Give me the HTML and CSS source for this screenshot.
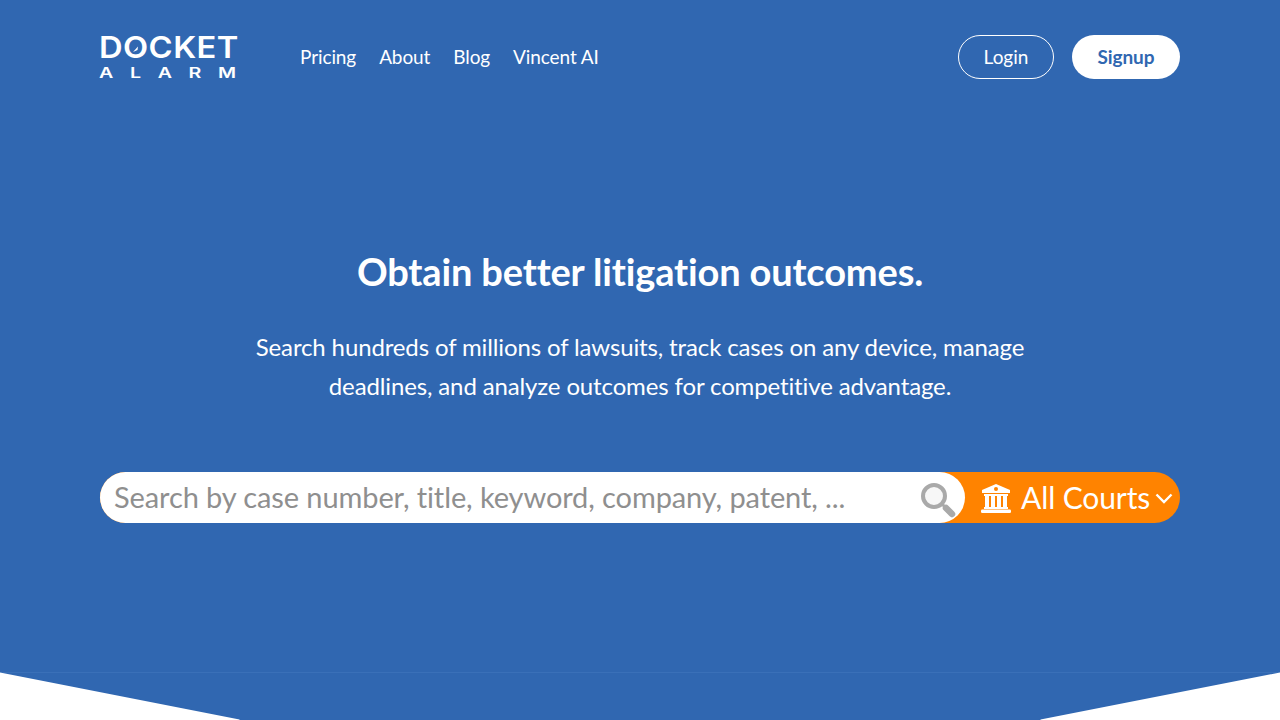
FILE: index.html
```html
<!DOCTYPE html>
<html lang="en">
<head>
    <meta charset="UTF-8">
    <meta name="viewport" content="width=device-width, initial-scale=1.0">
    <title>Docket Alarm</title>
    <link rel="stylesheet" href="styles.css">
</head>
<body>
    <div class="hero">
        <nav class="topbar">
            <a class="logo" href="#">
                <span class="logo-top">DOCKET</span>
                <span class="logo-bottom">ALARM</span>
                <svg class="logo-needle" width="10" height="10" viewBox="0 0 10 10">
                    <path d="M2 8 L7 2.5 L6.5 6 Z" fill="#fff"/>
                </svg>
            </a>
            <div class="nav-links">
                <a href="#">Pricing</a>
                <a href="#">About</a>
                <a href="#">Blog</a>
                <a href="#">Vincent AI</a>
            </div>
            <div class="nav-buttons">
                <a class="btn btn-login" href="#">Login</a>
                <a class="btn btn-signup" href="#">Signup</a>
            </div>
        </nav>

        <div class="intro">
            <h1>Obtain better litigation outcomes.</h1>
            <p>Search hundreds of millions of lawsuits, track cases on any device, manage deadlines, and analyze outcomes for competitive advantage.</p>
        </div>

        <form class="search">
            <div class="search-box">
                <input type="text" class="search-input" placeholder="Search by case number, title, keyword, company, patent, ..." autocomplete="off">
                <svg class="search-icon" width="36" height="36" viewBox="0 0 36 36">
                    <circle cx="14" cy="14" r="11" fill="#f7f7f7" stroke="#a9a9a9" stroke-width="4"/>
                    <path d="M22.5 22.5 L26 26" stroke="#a9a9a9" stroke-width="3"/>
                    <path d="M26 26 L32 32" stroke="#a9a9a9" stroke-width="6.5" stroke-linecap="round"/>
                </svg>
            </div>
            <div class="court-select">
                <svg class="court-icon" width="30" height="29" viewBox="0 0 30 29">
                    <path d="M15 0 L29 6 V9 H1 V6 Z" fill="#fff"/>
                    <circle cx="15" cy="5" r="2" fill="#ff8300"/>
                    <path d="M3 10 H27 V12 H3 Z M3 23 H27 V25 H3 Z" fill="#fff"/>
                    <path d="M4 12 H8 V23 H4 Z M10 12 H14 V23 H10 Z M16 12 H20 V23 H16 Z M22 12 H26 V23 H22 Z" fill="#fff"/>
                    <rect x="0" y="25.5" width="30" height="3.5" rx="1.2" fill="#fff"/>
                </svg>
                <span class="court-label">All Courts</span>
                <svg class="court-arrow" width="18" height="11" viewBox="0 0 18 11">
                    <path d="M1.5 1.5 L9 9 L16.5 1.5" fill="none" stroke="#fff" stroke-width="2.4"/>
                </svg>
            </div>
        </form>

        <svg class="hero-edge" width="1280" height="48" viewBox="0 0 1280 48">
            <path d="M0 0.5 H1280" stroke="#3a70b8" stroke-width="1"/>
            <path d="M0 0.5 L239.5 47.5 V48 H0 Z M1280 0.5 L1040.5 47.5 V48 H1280 Z" fill="#fff"/>
        </svg>
    </div>
</body>
</html>
```

FILE: styles.css
```css
html, body {
    margin: 0;
    height: 100%;
    overflow: hidden;
}

body {
    font-family: Lato, "Open Sans", sans-serif;
    font-variant-ligatures: none;
    color: #fff;
    background: #fff;
}

a {
    color: inherit;
    text-decoration: none;
}

.hero {
    position: relative;
    height: 720px;
    padding: 35px 100px 0;
    box-sizing: border-box;
    background: #3067b1;
}

.topbar {
    display: flex;
    align-items: center;
    height: 44px;
}

.logo {
    position: relative;
    display: flex;
    flex-direction: column;
    width: 138px;
    margin-right: 62px;
    font-family: Inter, sans-serif;
    font-weight: 600;
}

.logo-top {
    margin-left: -1px;
    font-size: 30px;
    line-height: 22px;
    letter-spacing: 0.4px;
    transform: scaleX(1.09);
    transform-origin: left;
}

.logo-bottom {
    margin: 9px 0 0 -1px;
    font-size: 14px;
    line-height: 11px;
    letter-spacing: 11.9px;
    transform: scaleX(1.4);
    transform-origin: left;
}

.logo-needle {
    position: absolute;
    top: 8px;
    left: 31px;
}

.nav-links {
    display: flex;
    gap: 23px;
    margin-top: -2px;
    font-size: 19px;
    letter-spacing: -0.1px;
}

.nav-buttons {
    display: flex;
    gap: 18px;
    margin-left: auto;
}

.btn {
    display: flex;
    justify-content: center;
    align-items: center;
    height: 44px;
    padding-bottom: 2px;
    border-radius: 22px;
    box-sizing: border-box;
    font-size: 19px;
}

.btn-login {
    width: 96px;
    border: 1px solid #fff;
}

.btn-signup {
    width: 108px;
    background: #fff;
    color: #3067b1;
    font-weight: 700;
    letter-spacing: -0.1px;
}

.intro {
    margin-top: 167px;
    text-align: center;
}

.intro h1 {
    margin: 0;
    font-size: 38px;
    line-height: 50px;
    font-weight: 700;
    letter-spacing: -0.15px;
}

.intro p {
    width: 800px;
    margin: 31px auto 0;
    font-size: 24px;
    line-height: 39px;
    letter-spacing: -0.13px;
}

.search {
    display: flex;
    height: 51px;
    margin-top: 67px;
    border-radius: 26px;
    background: #ff8300;
}

.search-box {
    position: relative;
    width: 865px;
    border-radius: 26px;
    background: #fff;
}

.search-input {
    width: 100%;
    height: 100%;
    padding: 0 60px 2px 14px;
    box-sizing: border-box;
    border: none;
    outline: none;
    background: transparent;
    font-family: inherit;
    font-variant-ligatures: none;
    font-size: 29px;
    letter-spacing: -0.1px;
}

.search-input::placeholder {
    color: #8f8f8f;
    opacity: 1;
}

.search-icon {
    position: absolute;
    top: 10px;
    right: 9px;
}

.court-select {
    display: flex;
    align-items: center;
    flex: 1;
    padding: 0 0 2px 16px;
    font-size: 30px;
}

.court-icon {
    margin-top: 3px;
}

.court-label {
    margin-left: 10px;
    letter-spacing: -0.1px;
}

.court-arrow {
    margin: 4px 0 0 5px;
}

.hero-edge {
    position: absolute;
    left: 0;
    bottom: 0;
    display: block;
}
```
